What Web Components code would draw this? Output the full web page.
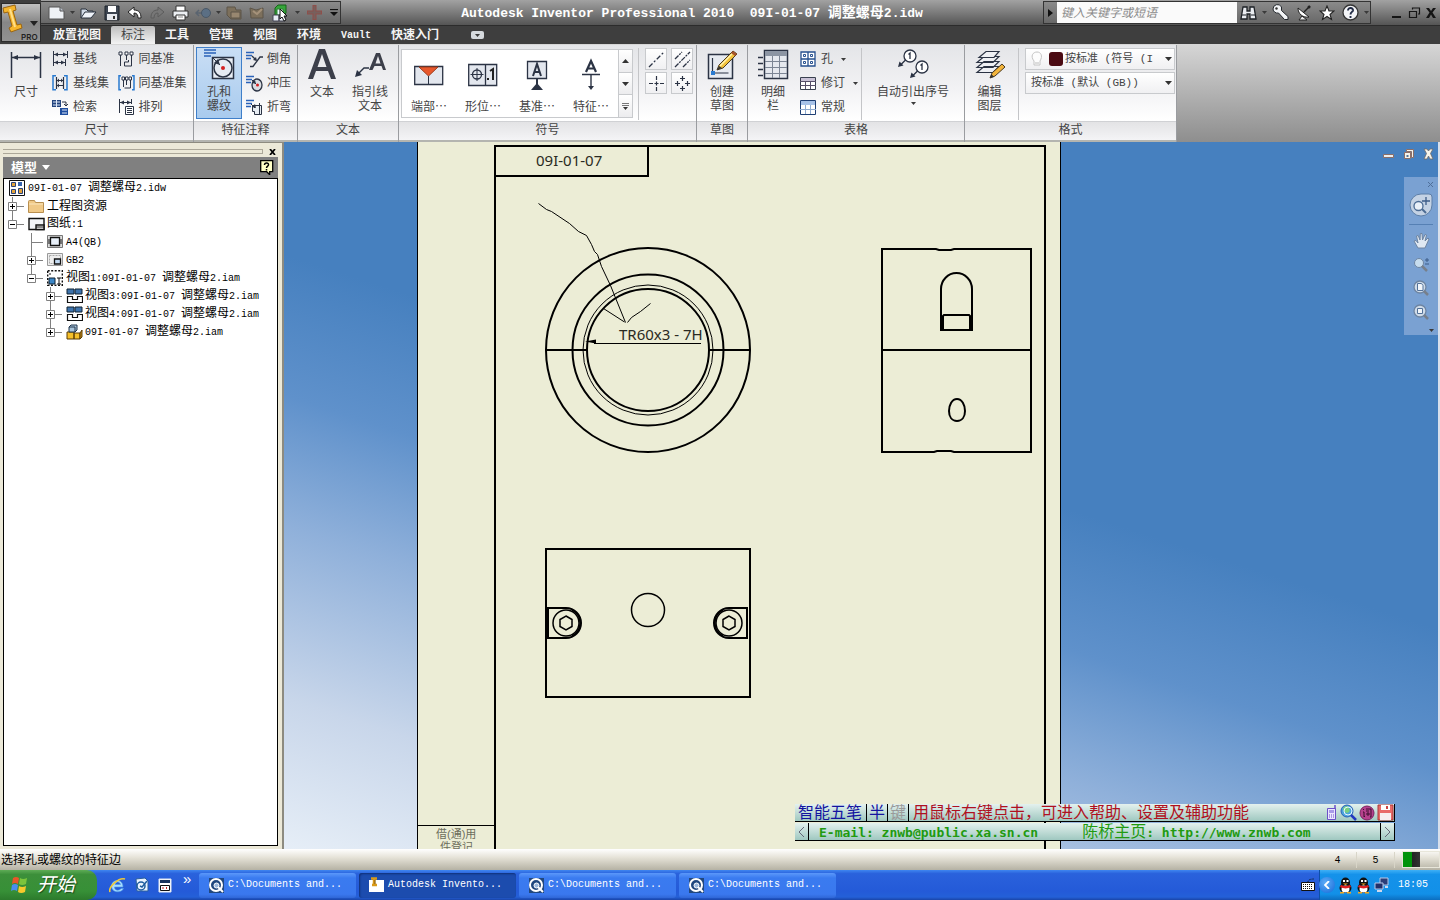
<!DOCTYPE html>
<html lang="zh-CN">
<head>
<meta charset="utf-8">
<title>Autodesk Inventor Professional 2010</title>
<style>
html,body{margin:0;height:100%;overflow:hidden}
body{font:12px/14px "Liberation Sans","Noto Sans CJK SC",sans-serif;color:#444}
</style>
</head>
<body>
<inventor-app></inventor-app>
<script>
const COMMON = `
*{box-sizing:border-box}
button,input,select{font:inherit;color:inherit;margin:0;padding:0;border:0;background:none;border-radius:0}
a{color:inherit;text-decoration:none}
.l{font-family:"Liberation Mono",monospace;font-size:var(--latin,10px);white-space:pre}
svg{display:block}
`;
/* Latin runs get the monospaced half-width face */
const mix = s => s.replace(/[\x20-\x7e]+/g, r => `<span class="l">${r}</span>`);

class Base extends HTMLElement {
  connectedCallback() {
    if (this.shadowRoot) return;
    const t = document.createElement('template');
    t.innerHTML = `<style>${COMMON}${this.css()}</style>${this.html()}`;
    this.attachShadow({mode: 'open'}).append(t.content.cloneNode(true));
  }
  css() { return ':host{display:block}'; }
}
const def = (name, css, html) => customElements.define(name, class extends Base {
  css() { return css; }
  html() { return typeof html === 'function' ? html(this) : html; }
});

const D = '#2b3344';
const lines3 = `<path d="M0 1.5h8M0 4.5h6M0 7.5h5" stroke="#2a62b8" stroke-width="1.4"/>`;
const pencil = `<path d="M10 20l2-5L26 1l4 3-14 14z" fill="#f3c33c" stroke="#4a3a20"/><path d="M24 3l4 3 2-2-4-3z" fill="#a5532d"/><path d="M13 16L25 4" stroke="#fff3b0" stroke-width="1.5"/><path d="M10 20l2-4 3 2z" fill="#333"/>`;
const ICONS = {
  new: [18,14,`<path d="M1 1h11l4 4v8H1z" fill="#eef1f5" stroke="#555"/><path d="M12 1v4h4" fill="#b9c0ca" stroke="#555"/>`],
  open: [17,14,`<path d="M1 12V3h5l2 2h5v2" fill="#cfd8e4" stroke="#28303c"/><path d="M1 12l4-6h11l-5 6z" fill="#eef2f8" stroke="#28303c"/>`],
  save: [17,16,`<path d="M1 1h14v14H1z" fill="#3c4450" stroke="#1d222a"/><path d="M4 1h8v6H4z" fill="#fff"/><path d="M3 9h10v6H3z" fill="#e6e9ee"/><path d="M9 11h2v3H9z" fill="#333"/>`],
  undo: [16,14,`<path d="M1 6l6-5v3c5 0 7 3 7 8h-3c0-3-1-5-4-5v4z" fill="#fff" stroke="#222"/>`],
  redo: [15,14,`<path d="M14 6L8 1v3C3 4 1 7 1 12h3c0-3 1-5 4-5v4z" fill="#777" stroke="#5c5c5c"/>`],
  print: [17,16,`<path d="M4 1h9v6H4z" fill="#fff" stroke="#333"/><path d="M1 6h15v6H1z" fill="#eceff3" stroke="#333"/><path d="M4 10h9v5H4z" fill="#fff" stroke="#333"/><path d="M6 12h5" stroke="#888"/>`],
  ball: [16,12,`<path d="M7 6H1m3-3L1 6l3 3" stroke="#5a6470" fill="none" stroke-width="1.5"/><circle cx="11" cy="6" r="4.500" fill="#5b6f84" stroke="#4b5866"/>`],
  sheets: [16,14,`<path d="M1 1h8l1 3h5v9H5l-4-4z" fill="#7d705c" stroke="#5d5548"/><path d="M5 6h9v6H5z" fill="#988770" stroke="#5d5548"/>`],
  sheets2: [16,14,`<path d="M1 2l6 2 7-2v10H2z" fill="#7d705c" stroke="#5d5548"/><path d="M4 5l4 3 5-5" fill="none" stroke="#a5927a" stroke-width="2"/>`],
  select: [18,18,`<path d="M3 4l3-3h8v8l-3 3H3z" fill="#36a53a" stroke="#156318"/><path d="M5 5h6v6H5z" fill="#eff" stroke="#2c7a30"/><path d="M1 11h6v6H1zM7 11h6v6H7z" fill="#e8edf4" stroke="#445"/><path d="M8 5v10l2-2 2 4 2-1-2-4h3z" fill="#fff" stroke="#111"/>`],
  plus: [16,16,`<path d="M7.500 0v15M0 7.500h15" stroke="#8e4f4a" stroke-width="4"/><path d="M7.500 1v13M1 7.500h13" stroke="#77605d" stroke-width="2"/>`],
  qatmore: [8,7,`<path d="M0 .5h8" stroke="#111" stroke-width="1.200"/><path d="M0 3h8L4 7z" fill="#111"/>`],
  dot: [5,3,`<path d="M0 0h5L2.500 3z" fill="#3a3a3a"/>`],
  binoc: [17,16,`<path d="M3 2h4v4h3V2h4l2 12h-6V9H7v5H1z" fill="#e9ecf0" stroke="#1d2126" stroke-width="1.300"/><path d="M2 10h4M11 10h4" stroke="#1d2126"/>`],
  key: [17,17,`<path d="M1 5a4.500 4.500 0 018.500-2v3.500L16 12.500v3h-3.500L6.500 9A4.500 4.500 0 011 5z" fill="#f2f4f6" stroke="#23272c"/><circle cx="4.500" cy="4.500" r="1.200" fill="#333"/>`],
  dish: [15,16,`<path d="M1 3c0 6 5 10 11 9z" fill="#fff" stroke="#222"/><path d="M7 7l6-6" stroke="#222" stroke-width="1.500"/><circle cx="12" cy="2" r="1.500" fill="#222"/><path d="M2 15l3-4 5 4z" fill="#eee" stroke="#222"/>`],
  star: [16,16,`<path d="M8 1l2 5h5l-4 3.500 1.500 5L8 11.500 3.500 14.500 5 9.500 1 6h5z" fill="#fff" stroke="#222" stroke-width="1.100"/>`],
  help: [17,17,`<circle cx="8.500" cy="8.500" r="7.500" fill="#f3f4f7" stroke="#333" stroke-width="1.300"/><path d="M6 6.500c0-3.500 5.500-3 5 0-.3 1.500-2.500 1.500-2.500 4M8.500 12v2" fill="none" stroke="#222c46" stroke-width="1.900"/>`],
  wmin: [12,12,`<path d="M1 9h9v2H1z" fill="#151515"/>`],
  wmax: [13,12,`<path d="M4.500 2.500V1h7v6H10M1.500 4.500h7v6h-7z" fill="none" stroke="#151515" stroke-width="1.200"/>`],
  wx: [12,12,`<path d="M1 1h3l2 3 2-3h3L7.500 5.500 11 11H8L6 7.500 4 11H1l3.500-5.500z" fill="#151515"/>`],
  dmin: [13,12,`<path d="M1.500 6.500h10v3h-10z" fill="#eee" stroke="#8c6f68"/>`],
  dmax: [13,12,`<path d="M4.500 1.500h7v8h-2v-6h-5z" fill="#f6f3ea" stroke="#8c6f68"/><path d="M2.500 4.500h6v6h-6z" fill="#f6f3ea" stroke="#8c6f68"/><path d="M4.500 7h2v2h-2z" fill="#55749a"/>`],
  dx: [13,12,`<path d="M2 1h3l1.500 2L8 1h3L8.500 5.500 11 11H8L6.500 8 5 11H2l2.500-5.500z" fill="#f6f3ea" stroke="#6f6a68" stroke-width=".8"/>`],
  dim: [32,34,`<path d="M1.500 4v26M30.500 4v26M2 9.500h28" stroke="${D}" fill="none" stroke-width="1.500"/><path d="M2 9.500l6-2.500v5zM30 9.500l-6-2.500v5z" fill="${D}"/>`],
  base: [16,16,`<path d="M1.500 0v15M15.500 0v7M2 3.500h13M2 11.500h11M13.500 8v7" stroke="${D}" fill="none"/><path d="M2 3.500l4-2v4zM15 3.500l-4-2v4zM2 11.500l4-2v4zM13 11.500l-4-2v4z" fill="${D}"/>`],
  baseset: [16,16,`<path d="M4 .7H1v14h3M12 .7h3v14h-3" stroke="#2a7bd0" fill="none" stroke-width="1.500"/><path d="M4.500 2v12M11.500 2v12M4 5.500h8M4 10.500h8" stroke="${D}" fill="none" stroke-width="1.200"/><path d="M5 5.500l2-2v4zM11 5.500l-2-2v4zM5 10.500l2-2v4z" fill="${D}"/>`],
  retr: [17,17,`<path d="M0 1h9v7H0z" fill="#23447e"/><path d="M1 3h7M1 6h7M4.500 1v7" stroke="#dfe8f7"/><path d="M8 9h8v7H8z" fill="#1f4ea0"/><path d="M10 11h5M10 14h5" stroke="#dfe8f7"/><path d="M10 3h4v4m-2-2l2 2 2-2" stroke="${D}" fill="none"/>`],
  ord: [16,16,`<path d="M2.500 3v12M8.500 3v6M13.500 3v12h-7v-4h4v-2" stroke="${D}" fill="none"/><path d="M1 1h3v3H1zM7 1h3v3H7zM12 1h3v3h-3z" fill="#fff" stroke="${D}"/>`],
  ordset: [17,16,`<path d="M3 .7H1v14h2M14 .7h2v14h-2" stroke="#2a7bd0" fill="none" stroke-width="1.500"/><path d="M5.500 5v7M8.500 5v5M12.500 5v8h-6" stroke="${D}" fill="none"/><path d="M4 2h2.500v3H4zM7.500 2H10v3H7.500zM11 2h2.500v3H11z" fill="#fff" stroke="${D}"/>`],
  arr: [17,17,`<path d="M1.500 0v14M13.500 0v5M2 3.500h11" stroke="${D}" fill="none"/><path d="M2 3.500l4-2v4zM13 3.500l-4-2v4z" fill="${D}"/><path d="M7.500 7.500h8v8h-8z" fill="#fff" stroke="${D}"/><path d="M9 9.500h5M9 11.500h5M9 13.500h5" stroke="${D}"/>`],
  hole: [32,34,`<path d="M1 2h12M1 5h12M1 8h7" stroke="#2a62b8" stroke-width="1.500"/><path d="M9.500 9.500h21v21h-21z" fill="#e9eef5" stroke="${D}" stroke-width="1.500"/><circle cx="20" cy="20" r="9" fill="#e6ebf2" stroke="${D}" stroke-width="1.500"/><circle cx="20" cy="20" r="2" fill="#d42020"/><path d="M10 10l7 7" stroke="${D}"/><path d="M17 17l-6-2 4-4z" fill="${D}"/>`],
  chamfer: [17,17,`${lines3}<path d="M4 15.500h3L14 6h3M6 5l4 4" stroke="${D}" fill="none" stroke-width="1.300"/><path d="M11 10L7 9l3-3z" fill="${D}"/>`],
  punch: [17,17,`${lines3}<ellipse cx="11" cy="10" rx="5" ry="6" fill="#d9dde3" stroke="${D}" stroke-width="1.300"/><path d="M6 5l4 4" stroke="${D}"/><path d="M10 9L6 8l3-3z" fill="${D}"/><circle cx="11.500" cy="10" r="1.500" fill="#d42020"/>`],
  bend: [17,17,`${lines3}<path d="M6.500 12.500v-6h9v9h-7v-3z" fill="#e8edf3" stroke="${D}"/><path d="M13.500 4v12" stroke="${D}"/><path d="M5 5l4 4" stroke="${D}"/><path d="M10 9L6 8l3-3z" fill="${D}"/>`],
  textA: [32,34,`<path d="M2 31L13 1h6l11 30h-5l-3-8H10l-3 8zM11.500 19h9L16 6z" fill="#3c3f4a" fill-rule="evenodd"/>`],
  leader: [32,34,`<path d="M15 22L22 5h4l6 17h-3l-1.500-4h-7L18.500 22zM21.500 15.500h5L24 8z" fill="#3c3f4a" fill-rule="evenodd"/><path d="M15 20h-5l-7 7" stroke="${D}" fill="none" stroke-width="1.400"/><path d="M1 29l2-7 5 5z" fill="${D}"/>`],
  endfill: [30,34,`<path d="M.7 8.500h28v18h-28z" fill="#e3e7ee" stroke="${D}" stroke-width="1.300"/><path d="M5 9h19L14.500 18z" fill="#e8582c" stroke="#9d3c1c"/><path d="M14.500 18v9" stroke="${D}"/>`],
  fcf: [30,34,`<path d="M.7 6.500h28v21H.7zM17.500 7v20" fill="#e3e7ee" stroke="${D}" stroke-width="1.300"/><circle cx="9" cy="16.500" r="4.500" fill="none" stroke="${D}" stroke-width="1.300"/><path d="M9 10v13M2.500 16.500h13" stroke="${D}"/><path d="M22 13l3-2v11M20 20v2" stroke="#222" stroke-width="2" fill="none"/>`],
  datum: [24,34,`<path d="M2.500 3.500h19v17h-19z" fill="#e3e7ee" stroke="${D}" stroke-width="1.300"/><path d="M8 18l4-12 4 12M9.500 14h5M12 21v6" fill="none" stroke="${D}" stroke-width="2"/><path d="M12 25l6 7H6z" fill="${D}"/>`],
  feat: [20,34,`<path d="M5 14L10 3l5 11M7 10.500h6" fill="none" stroke="${D}" stroke-width="2.200"/><path d="M1 16.500h18M10 17v13" stroke="${D}" stroke-width="1.400"/><path d="M10 32l-3-4h6z" fill="${D}"/>`],
  up: [7,4,`<path d="M0 4h7L3.500 0z" fill="#333"/>`],
  down: [7,4,`<path d="M0 0h7L3.500 4z" fill="#333"/>`],
  more: [7,7,`<path d="M0 .5h7M0 2.500h7" stroke="#555" stroke-width=".8"/><path d="M1 4h5L3.500 7z" fill="#333"/>`],
  c1: [17,17,`<path d="M1 16L16 1" stroke="${D}" stroke-width="1.300" stroke-dasharray="5 2 2 2"/>`],
  c2: [17,17,`<path d="M1 8L8 1M1 16L16 1M9 16l7-7" stroke="${D}" stroke-width="1.300" stroke-dasharray="5 1 2 1"/>`],
  c3: [17,17,`<path d="M8.500 1v4m0 1.500v4m0 1.500v4M1 8.500h4m1.500 0h4m1.500 0h4" stroke="${D}" stroke-width="1.200"/>`],
  c4: [17,17,`<path d="M8.500 1v5M6 3.500h5M3.500 6v5M1 8.500h5M13.500 6v5M11 8.500h5M8.500 11v5M6 13.500h5" stroke="${D}" stroke-width="1.200"/>`],
  sketch: [32,34,`<path d="M2.500 6.500h24v24h-24z" fill="#e7ebf1" stroke="${D}" stroke-width="1.500"/><path d="M6.500 10v15h16" stroke="${D}" fill="none" stroke-width="1.200"/><path d="M5 23h4v4H5z" fill="#2a7bd0"/><g transform="translate(1 2)">${pencil}</g>`],
  bom: [32,34,`<path d="M7.500 2.500h23v28h-23z" fill="#e5e8ee" stroke="${D}" stroke-width="1.500"/><path d="M8 3h22v5H8z" fill="#8c95a3"/><path d="M8 13.500h22M8 19.500h22M8 25.500h22M15.500 8v22M22.500 8v22" stroke="#7c8594"/><path d="M1 9.500h5M1 15.500h5M1 21.500h5M1 27.500h5" stroke="${D}" stroke-width="1.300"/>`],
  holes: [17,17,`<path d="M1 1h7v7H1zM8 1h7v7H8zM1 8h7v7H1zM8 8h7v7H8z" fill="#fff" stroke="#27508f" stroke-width="1.300"/><path d="M3.500 3.500h2v2h-2zM10.500 3.500h2v2h-2zM3.500 10.500h2v2h-2zM10.500 10.500h2v2h-2z" fill="#fff" stroke="#27508f"/>`],
  rev: [17,15,`<path d="M.5 1.500h15v12H.5z" fill="#fff" stroke="#39404f"/><path d="M1 2h14v3H1z" fill="#c9c2d6"/><path d="M0 5.500h16M0 9.500h16M5.500 5v8M10.500 5v8" stroke="#57506a"/>`],
  gen: [17,17,`<path d="M.5 1.500h15v14H.5z" fill="#fff" stroke="#1f3f74"/><path d="M1 2h14v4H1z" fill="#a7c2e8"/><path d="M0 10.500h16M5.500 6v9M10.500 6v9" stroke="#8fabd0"/>`],
  balloon: [32,34,`<circle cx="13" cy="8" r="6" fill="#fff" stroke="${D}" stroke-width="1.300"/><circle cx="25" cy="19" r="6" fill="#fff" stroke="${D}" stroke-width="1.300"/><path d="M11.500 6.500L13 5v6M23.500 17.500L25 16v6" stroke="${D}" fill="none" stroke-width="1.300"/><path d="M8.500 12L3 17.500M20.500 23L15 28.500" stroke="${D}" stroke-width="1.300"/><path d="M1 19l1.500-5.500 4 4zM13 30l1.500-5.500 4 4z" fill="${D}"/>`],
  layer: [32,34,`<path d="M3 24.500l7-6h15l-6 6zM3 19.500l7-6h15l-6 6zM3 14.500l7-6h15l-6 6z" fill="#eef0f4" stroke="${D}" stroke-width="1.200"/><path d="M5 9.500l7-6h13l-5 6z" fill="#eef0f4" stroke="${D}" stroke-width="1.200"/><path d="M16 30l2-5 10-9 3 3-10 9z" fill="#f3b53c" stroke="#4a3a20"/><path d="M16 30l1.500-4 2.500 3z" fill="#333"/>`],
  bulb: [12,16,`<path d="M3 10C-1 5 2 1 6 1s6 4 3 9v4H3z" fill="#fdfdfd" stroke="#c4c4c4"/><path d="M4 12h4" stroke="#bbb"/>`],
  root: [16,16,`<path d="M.5.5h15v15H.5z" fill="#fff" stroke="#111"/><path d="M2.500 9.500h4v4h-4zM9.500 8.500h4v5h-4z" fill="#e3a33a" stroke="#28427a"/><path d="M2.500 2.500h4v4h-4z" fill="#e3a33a" stroke="#28427a"/><path d="M9 2h4v4H9z" fill="#3865b0"/>`],
  folder: [17,15,`<path d="M.5 2.500q0-1 1-1h5l1 2h8v10H.5z" fill="#f0c987" stroke="#b98f4f"/><path d="M1 5h14" stroke="#fbe6bd"/>`],
  sheet: [17,14,`<path d="M1 1.500h15v11H1z" fill="#f2f4f7" stroke="#111" stroke-width="1.400"/><path d="M8 8h8v4.500H8z" fill="#fff" stroke="#111" stroke-width="1.400"/><path d="M8 10h8" stroke="#111"/>`],
  border: [16,14,`<path d="M.5.5h15v12H.5z" fill="#ddd" stroke="#777"/><path d="M3.500 2.500h9v8h-9z" fill="#e8eff8" stroke="#111" stroke-width="1.300"/><path d="M2 4v5M14 4v5" stroke="#111"/>`],
  tblock: [16,14,`<path d="M.5.5h15v12H.5z" fill="#eee" stroke="#999"/><path d="M2.500 2.500h11v8h-11z" fill="none" stroke="#aaa" stroke-dasharray="2 1"/><path d="M7.500 6h6v5h-6z" fill="#c4dbf3" stroke="#111" stroke-width="1.300"/>`],
  view1: [16,16,`<path d="M.7.7h14.600v14.600H.7z" fill="#fff" stroke="#111" stroke-dasharray="2 1.500" stroke-width="1.400"/><path d="M2 8h6v6H2z" fill="#3b86c6" stroke="#123"/><path d="M3 5V3M10 8h4M12 8v6M10 14h4" stroke="#111" fill="none"/>`],
  viewn: [17,16,`<path d="M1 1h7v5H1zM9 1h7v5H9z" fill="#3f74ad" stroke="#123"/><path d="M1.500 8.500h5v3h5v-3h5M1.500 8v6.500h15V8" fill="#fff" stroke="#111" stroke-width="1.200"/>`],
  cubes: [17,17,`<path d="M1 8h7v7H1zM8 9h6v6H8z" fill="#f6c02a" stroke="#5a3d05"/><path d="M14 9l2-3v7l-2 2z" fill="#c98b14" stroke="#5a3d05"/><path d="M3 3l2-2h6v5L9 8H3z" fill="#a9c4da" stroke="#20354a"/><path d="M3 3h6v5" fill="none" stroke="#20354a"/>`],
  bhelp: [14,15,`<path d="M.7.7h12v11h-3v3l-3-3h-6z" fill="#ffffc8" stroke="#000" stroke-width="1.300"/><path d="M4.500 5c0-3 4.500-2.500 4 0-.2 1.200-2 1.200-2 3M6.500 9v1.500" fill="none" stroke="#000" stroke-width="1.500"/>`],
  bx: [7,6,`<path d="M1 0l5 6M6 0L1 6" stroke="#000" stroke-width="1.700"/>`],
  nwheel: [24,26,`<path d="M12 1h8q3 0 3 3v8A11 11 0 1112 1z" fill="#c4d2e4" stroke="#5d7fa8"/><circle cx="9.500" cy="13" r="4.500" fill="#e9f0f8" stroke="#4c6c94" stroke-width="1.300"/><path d="M13 16l4 4" stroke="#4c6c94" stroke-width="2"/><path d="M17 4v8M13 8h8" stroke="#3c5c88" stroke-width="1.300"/>`],
  hand: [17,17,`<path d="M5 16L1 9l2-.5L5 11 3.500 4l1.700-.5L7 8l.3-6.500H9L9.500 8 12 2.500l1.500.5L12 9l3-3 1 1-4 9z" fill="#dfe8f2" stroke="#6e85a2"/>`],
  nz: [17,17,`<circle cx="6" cy="7" r="4.500" fill="#c6dcee" stroke="#6e85a2"/><path d="M9 10l5 5" stroke="#77808c" stroke-width="2.500"/><path d="M14 2v4M12 4h4M12 8h4" stroke="#3c5c88"/>`],
  np: [17,17,`<circle cx="7" cy="7" r="6" fill="#cfdbe8" stroke="#6e85a2" stroke-width="1.300"/><path d="M11 11l4 4" stroke="#77808c" stroke-width="2.500"/><path d="M4.500 3.500h4l1.500 2v5h-5.500z" fill="#f2f6fa" stroke="#53729a"/>`],
  nb: [17,17,`<circle cx="7" cy="7" r="6" fill="#cfdbe8" stroke="#6e85a2" stroke-width="1.300"/><path d="M11 11l4 4" stroke="#77808c" stroke-width="2.500"/><path d="M4.500 4.500h5v5h-5z" fill="#f2f6fa" stroke="#53729a"/>`],
  nx: [6,6,`<path d="M0 0l5 5M5 0L0 5" stroke="#4f6f99"/>`],
  phone: [12,15,`<path d="M1.500 3.500h8v11h-8z" fill="#ebe6ff" stroke="#6b50c8"/><path d="M9 0v4" stroke="#6b50c8" stroke-width="1.500"/><path d="M3 5h5v3H3z" fill="#a99ae8"/><path d="M3 10h5M3 12h5" stroke="#6b50c8" stroke-dasharray="1 1"/>`],
  globe: [17,17,`<circle cx="7" cy="7" r="6" fill="#4aa4dc" stroke="#2a5fb8"/><path d="M3 4q4-4 6 0t-2 5q-4-1-4-5z" fill="#78d080"/><circle cx="8" cy="7" r="4" fill="none" stroke="#e9f6ff"/><path d="M11 11l5 5" stroke="#2338c0" stroke-width="2.500"/>`],
  ci: [16,16,`<circle cx="8" cy="8" r="7" fill="#b6418d" stroke="#7b2361"/><path d="M4 4l1 1M4 7h1v5l1-1M7 4h5v8h-1M7 6h3M8 8h2v2H8z" stroke="#3d0f2f" fill="none"/>`],
  disk: [17,17,`<path d="M1 1h15v15H1z" fill="#e86a68" stroke="#a83a3a"/><path d="M4 1h9v5H4z" fill="#fff"/><path d="M9 2h2v3H9z" fill="#c44"/><path d="M3 9h11v7H3z" fill="#f6eeee"/>`],
  flag: [19,18,`<path d="M3 2q3-2 6 0L8 8Q5 6 2 8z" fill="#e8562a"/><path d="M10 2q3 2 7 0l-1 6q-4 2-7 0z" fill="#7cc43c"/><path d="M2 9q3-2 6 0l-1 6q-3-2-6 0z" fill="#4a8df0"/><path d="M9 10q3 2 7 0l-1 6q-4 2-7 0z" fill="#f8c92c"/>`],
  ie: [17,17,`<path d="M14 10H5.500c0 4 5 4 6.500 1.500h2.500c-2 5-12 4.500-12-2.500S14 1 14 10zM6 7.500h5.500c-1-3.500-4.500-3.500-5.500 0z" fill="#a8dcff" stroke="#4a9ae8" stroke-width=".6" fill-rule="evenodd"/><path d="M1 15C-1 10 10 0 16 2" fill="none" stroke="#f0c838" stroke-width="1.600"/>`],
  desk: [16,16,`<path d="M2 2l9-1 3 3v10H3z" fill="#e9f3ff" stroke="#2a5f9c"/><circle cx="7" cy="9" r="4" fill="none" stroke="#1e5d9e" stroke-width="1.500"/><path d="M6 9l2 1 5-6" stroke="#1e5d9e" stroke-width="1.500" fill="none"/>`],
  cal: [14,15,`<path d="M1 1h12v13H1z" fill="#fff" stroke="#dfe6f0"/><path d="M2 2h10v3H2z" fill="#18325c"/><path d="M2.500 7.500h9v5h-9z" fill="#fff" stroke="#111"/><path d="M4.500 10h1M8 10h1" stroke="#c22" stroke-width="2"/>`],
  cdoc: [17,17,`<path d="M1 1h15v15H1z" fill="#20477e"/><circle cx="8" cy="8" r="6" fill="none" stroke="#fff" stroke-width="2"/><circle cx="8.500" cy="8.500" r="2.500" fill="#9db9dc" stroke="#fff"/><path d="M10 10l5 5" stroke="#fff" stroke-width="2"/>`],
  inv: [17,16,`<path d="M1 3h15v12H1z" fill="#fff"/><path d="M3 1.500h6M6 1v7M4 8h5" stroke="#d99a18" stroke-width="2.500"/><path d="M7 3v4" stroke="#7a5510"/>`],
  kbd: [15,14,`<path d="M7 4q0-3 6-3" fill="none" stroke="#111" stroke-dasharray="1 1"/><path d="M.5 4.500h13v8H.5z" fill="#fff" stroke="#111"/><path d="M2 6.500h10M2 8.500h10M2 10.500h10" stroke="#111" stroke-dasharray="1 1"/>`],
  qq: [15,17,`<ellipse cx="7.500" cy="5.500" rx="4.500" ry="5" fill="#111"/><ellipse cx="7.500" cy="11" rx="6" ry="5" fill="#111"/><ellipse cx="7.500" cy="12" rx="4" ry="3.500" fill="#fff"/><path d="M2.500 9q5 2.500 10 0" stroke="#e02020" stroke-width="2.500" fill="none"/><path d="M5 3h2v2H5zM8.500 3h2v2h-2z" fill="#fff"/><path d="M5 6.500h5L7.500 8zM2 15h4v1.500H2zM9 15h4v1.500H9z" fill="#f5a81c"/>`],
  net: [16,16,`<path d="M6 1h8v7H6z" fill="#2d3e78" stroke="#b9c8e8"/><path d="M1 6h8v6H1z" fill="#22306a" stroke="#b9c8e8"/><path d="M3 14h5M11 10h3" stroke="#cfd8ec" stroke-width="2"/>`]
};
def('x-icon', ':host{display:block;flex:none}', el => {
  const [w, h, c] = ICONS[el.getAttribute('name')];
  return `<svg width="${w}" height="${h}" viewBox="0 0 ${w} ${h}" fill="none" aria-hidden="true">${c}</svg>`;
});
const ic = n => `<x-icon name="${n}"></x-icon>`;

/* ---- title bar ---- */
const slot = (w, n, label) => `<button style="width:${w}px" aria-label="${label}">${ic(n)}</button>`;
def('quick-access', `:host{display:flex;align-items:center;height:23px;width:300px;padding-left:6px;border:1px solid #333;border-left:0;background:linear-gradient(#8a8a8a,#686868)}
button{display:flex;justify-content:center;align-items:center;height:21px;flex:none}`,
  slot(20,'new','新建')+slot(10,'dot','新建选项')+slot(23,'open','打开')+slot(24,'save','保存')+slot(22,'undo','放弃')+slot(22,'redo','重做')+slot(24,'print','打印')+slot(22,'ball','返回')+slot(8,'dot','返回选项')+slot(24,'sheets','更新')+slot(22,'sheets2','全部更新')+slot(26,'select','选择')+slot(6,'dot','选择选项')+slot(30,'plus','添加')+slot(8,'qatmore','自定义'));

def('info-search', `:host{display:flex;align-items:center;height:23px;width:328px;border:1px solid #333;background:linear-gradient(#8a8a8a,#686868)}
.go{width:13px;display:flex;justify-content:center}
input{width:180px;height:21px;padding-left:4px;background:#fafafa;color:#8a8a8a;font-style:italic;font-size:12px}
input::placeholder{color:#8a8a8a;opacity:1}
button{display:flex;justify-content:center;align-items:center;height:21px;flex:none}`,
  `<button class="go" aria-label="展开"><svg width="5" height="8"><path d="M0 0l5 4-5 4z" fill="#111"/></svg></button>
  <input aria-label="搜索" placeholder="键入关键字或短语">` +
  slot(23,'binoc','搜索')+slot(9,'dot','搜索选项')+slot(23,'key','速博中心')+slot(24,'dish','通讯中心')+slot(22,'star','收藏夹')+slot(24,'help','帮助')+slot(8,'dot','帮助选项'));

def('title-bar', `:host{display:flex;align-items:center;height:26px;background:linear-gradient(#a2a2a2,#555);border-bottom:1px solid #2c2c2c}
h1{flex:1;margin:0;text-align:center;font-size:14px;line-height:20px;font-weight:700;color:#fff;white-space:nowrap;--latin:13px}
.win{width:69px;padding-left:20px;display:flex;gap:5px}
.win button{width:12px}`,
  `<quick-access></quick-access><h1>${mix('Autodesk Inventor Professional 2010  09I-01-07 调整螺母2.idw')}</h1><info-search></info-search>
  <div class="win"><button aria-label="最小化">${ic('wmin')}</button><button aria-label="还原">${ic('wmax')}</button><button aria-label="关闭">${ic('wx')}</button></div>`);

def('ribbon-tabs', `:host{display:flex;align-items:center;height:18px;padding-left:2px;background:#3e3e3e}
button{height:18px;padding:0 10px;color:#f4f4f4;font-weight:700;line-height:16px;white-space:nowrap}
[aria-selected=true]{background:linear-gradient(#bdbdbd,#f4f4f4);color:#444;font-weight:400;border-radius:2px 2px 0 0}
.min{margin-left:22px;width:13px;height:8px;padding:0;background:#d6dade;border-radius:2px;display:flex;justify-content:center;align-items:center}`,
  '放置视图,标注,工具,管理,视图,环境,Vault,快速入门'.split(',').map((t,i)=>`<button role="tab" aria-selected="${i==1}">${mix(t)}</button>`).join('') +
  `<button class="min" aria-label="最小化功能区">${ic('dot')}</button>`);

def('app-menu', `:host{display:block;flex:none;width:41px;height:44px;padding:3px 0 2px 1px;background:#3e3e3e}
button{display:block;width:40px;height:39px;border:1px solid #2c2c2c;background:linear-gradient(#c0c0c0,#868686 50%,#929292)}`,
  `<button aria-label="应用程序菜单"><svg width="38" height="37"><path d="M1 4l12-3 1 5-3 1 4 14 4-1 1 4-11 4-2-4 3-2L6 8l-4 1z" fill="#f5b52c" stroke="#9a6512"/><path d="M8 5l5 18" stroke="#ffe08a" stroke-width="2"/><path d="M28 17h8l-4 5z" fill="#222"/><text x="19" y="36" font-family="Inter,sans-serif" font-size="8" font-weight="600" fill="#222">PRO</text></svg></button>`);

/* ---- ribbon ---- */
def('big-button', `:host{display:block;flex:none}
button{display:flex;flex-direction:column;align-items:center;width:100%;height:72px;gap:3px;border:1px solid transparent;line-height:14px;text-align:center;white-space:nowrap}
:host([active]) button{background:linear-gradient(#c9def5,#a9cbee);border-color:#3f7fc9}`,
  el => `<button>${ic(el.getAttribute('icon'))}<span>${el.getAttribute('label').replace('|','<br>')}</span>${el.hasAttribute('menu')?ic('dot'):''}</button>`);
def('small-button', `:host{display:block;height:24px}
button{display:flex;align-items:center;height:24px;gap:4px;white-space:nowrap}
x-icon{width:17px}.dd{width:5px;margin-left:4px}`,
  el => `<button>${ic(el.getAttribute('icon'))}<span>${el.getAttribute('label')}</span>${el.hasAttribute('menu')?`<x-icon class="dd" name="dot"></x-icon>`:''}</button>`);
def('ribbon-panel', `:host{display:flex;flex-direction:column;flex:none;height:97px;border-right:1px solid #9a9ca0;background:linear-gradient(#e4e5e8,#f2f2f4 45%,#fff 78%)}
.body{display:flex;height:76px;padding-top:2px}
h2{margin:0;height:21px;font-size:12px;line-height:17px;font-weight:400;text-align:center;border-top:1px solid #d0d1d4;border-bottom:2px solid #b4b5b0;background:linear-gradient(#e3e3e5,#f4f4f6)}`,
  el => `<div class="body"><slot></slot></div><h2>${el.getAttribute('label')}</h2>`);
def('symbol-gallery', `:host{display:flex;width:232px;height:69px;margin-top:2px;border:1px solid #c8cacd;background:#fff}
.i{display:flex;flex-direction:column;align-items:center;width:54px;height:67px;padding-top:8px;line-height:14px;gap:7px;font-family:"Noto Sans CJK SC",sans-serif}
.s{display:flex;flex-direction:column;width:14px;border-left:1px solid #c8cacd}
.s button{flex:1;display:flex;align-items:center;justify-content:center;border-bottom:1px solid #c8cacd;background:linear-gradient(#fff,#ececee)}
.s button:last-child{border:0}`,
  [['endfill','端部…'],['fcf','形位…'],['datum','基准…'],['feat','特征…']].map(([i,t])=>`<button class="i">${ic(i)}<span>${t}</span></button>`).join('') +
  `<div class="s"><button aria-label="上移">${ic('up')}</button><button aria-label="下移">${ic('down')}</button><button aria-label="更多">${ic('more')}</button></div>`);
def('center-marks', `:host{display:grid;grid-template-columns:22px 22px;grid-auto-rows:22px;gap:2px 4px;align-content:start;margin:1px 0 0 6px}
button{display:flex;align-items:center;justify-content:center;border:1px solid #c8cacd;background:linear-gradient(#fff,#f0f0f2)}`,
  ['c1','c2','c3','c4'].map(n=>`<button aria-label="中心线">${ic(n)}</button>`).join(''));
def('style-select', `:host{display:flex;align-items:center;width:150px;height:22px;border:1px solid #c8cacd;background:linear-gradient(#fff,#f0f0f2)}
label{display:flex;align-items:center;width:100%;padding:0 2px 0 5px}
select{appearance:none;flex:1;min-width:0;height:20px;font-family:"Liberation Mono","Noto Sans CJK SC",sans-serif;font-size:11px;outline:0}
.c{width:14px;height:14px;border-radius:3px;background:#4a0a12;margin:0 2px 0 6px}`,
  el => `<label>${el.hasAttribute('layer')?ic('bulb')+'<span class="c"></span>':''}<select aria-label="${el.getAttribute('value')}"><option>${el.getAttribute('value')}</option></select>${ic('down')}</label>`);

const big = (w,i,l,x='') => `<big-button style="width:${w}px" icon="${i}" label="${l}" ${x}></big-button>`;
const col = (w,items) => `<div style="width:${w}px">${items.map(([i,l,m])=>`<small-button icon="${i}" label="${l}" ${m||''}></small-button>`).join('')}</div>`;
const panel = (w,l,c) => `<ribbon-panel style="width:${w}px" label="${l}">${c}</ribbon-panel>`;
def('app-ribbon', `:host{display:flex;height:98px;padding-top:1px;background:linear-gradient(#d6d6d6,#8e8e8e)}
.sep{width:1px;height:72px;background:#c4c5c8;margin-top:1px}`,
  panel(194,'尺寸', big(52,'dim','尺寸')+col(66,[['base','基线'],['baseset','基线集'],['retr','检索']])+col(76,[['ord','同基准'],['ordset','同基准集'],['arr','排列']])) +
  panel(104,'特征注释', `<div style="width:2px"></div>`+big(46,'hole','孔和|螺纹','active')+`<div style="width:4px"></div>`+col(50,[['chamfer','倒角'],['punch','冲压'],['bend','折弯']])) +
  panel(101,'文本', big(48,'textA','文本')+big(48,'leader','指引线|文本')) +
  panel(298,'符号', `<symbol-gallery style="margin-left:2px"></symbol-gallery><div style="width:5px"></div><div class="sep"></div><center-marks></center-marks>`) +
  panel(51,'草图', big(50,'sketch','创建|草图')) +
  panel(217,'表格', big(50,'bom','明细|栏')+`<div style="width:2px"></div>`+col(62,[['holes','孔','menu'],['rev','修订','menu'],['gen','常规']])+`<div class="sep"></div>`+big(102,'balloon','自动引出序号','menu')) +
  panel(212,'格式', big(49,'layer','编辑|图层')+`<div class="sep" style="margin:1px 6px 0 4px"></div><div style="display:grid;gap:2px;align-content:start;padding-top:1px"><style-select layer value="按标准 (符号 (I"></style-select><style-select value="按标准 (默认 (GB))"></style-select></div>`));

/* ---- model browser ---- */
def('tree-row', `:host{display:flex;align-items:center;height:18px;color:#000;white-space:nowrap}
x-icon{width:19px}`,
  el => {
    const lv = +el.getAttribute('level'), t = el.getAttribute('toggle'), last = el.hasAttribute('last');
    const tw = lv ? `<svg width="22" height="18" style="margin-left:${(lv-1)*19+2}px" fill="none"><path d="M6.500 0v${last?9:18}M6.500 9.500H18" stroke="#808080"/>${t?`<path d="M2.500 5.500h8v8h-8z" fill="#fff" stroke="#808080"/><path d="M4 9.500h5${t=='+'?'M6.500 7v5':''}" stroke="#000"/>`:''}</svg>` : `<span style="width:5px"></span>`;
    return `${tw}${ic(el.getAttribute('icon'))}<span>${mix(el.getAttribute('label'))}</span>`;
  });
const tr = (lv,t,i,l,x='') => `<tree-row role="treeitem" level="${lv}" toggle="${t}" icon="${i}" label="${l}" ${x}></tree-row>`;
def('model-browser', `:host{display:flex;flex-direction:column;flex:none;width:284px;padding:3px 4px 3px 3px;background:#ece9d8;border-right:2px solid #8d8b80;border-top:1px solid #8d8b80}
.grip{display:flex;align-items:center;height:11px;gap:6px}
.grip i{flex:1;height:5px;border:1px solid #aca899;border-width:1px 1px 1px 0}
.grip button{width:9px}
header{display:flex;align-items:center;height:21px;padding:0 4px 0 8px;gap:5px;background:#808080;color:#fff;font-size:13px;font-weight:700}
header x-icon:last-child{margin-left:auto}
.tree{flex:1;border:1px solid #000;background:#fff}`,
  `<div class="grip"><i></i><button aria-label="关闭">${ic('bx')}</button></div>
  <header>模型<svg width="8" height="5"><path d="M0 0h8L4 5z" fill="#fff"/></svg>${ic('bhelp')}</header>
  <div class="tree" role="tree">` +
  tr(0,'','root','09I-01-07 调整螺母2.idw')+tr(1,'+','folder','工程图资源')+tr(1,'-','sheet','图纸:1','last')+tr(2,'','border','A4(QB)')+tr(2,'+','tblock','GB2')+tr(2,'-','view1','视图1:09I-01-07 调整螺母2.iam','last')+tr(3,'+','viewn','视图3:09I-01-07 调整螺母2.iam')+tr(3,'+','viewn','视图4:09I-01-07 调整螺母2.iam')+tr(3,'+','cubes','09I-01-07 调整螺母2.iam','last') + `</div>`);

/* ---- drawing ---- */
const bolt = `<path d="M2 608h18a15 15 0 010 30H2z" stroke-width="2"/><circle cx="20" cy="623" r="13" stroke-width="1.500"/><path d="M20 616l6 3.500v7L20 630l-6-3.500v-7z" stroke-width="1.500"/><path d="M26 610a14.500 14.500 0 010 26" stroke-width="1.500"/>`;
def('drawing-sheet', `:host{display:block;flex:none}
svg text{font-family:"Noto Sans",sans-serif;font-size:15px;fill:#2a2a22}
svg .zh{font-family:"Liberation Sans","Noto Sans CJK SC",sans-serif;font-size:11px;fill:#6d6d5c}`,
  `<svg width="644" height="708" viewBox="417 142 644 708" fill="none" stroke="#000" stroke-width="2" role="img" aria-label="工程图">
  <path d="M417 142h644v708H417z" fill="#ecedd6" stroke="none"/>
  <path d="M417.500 142v708M1060.500 142v708M417 825.500h78" stroke-width="1"/>
  <path d="M495 850V146h550v704M495 176h153V146"/>
  <circle cx="648" cy="350" r="102"/><circle cx="648" cy="350" r="75.500"/><circle cx="648" cy="350" r="65" stroke-width="1"/><circle cx="648" cy="350" r="61"/>
  <path d="M546 350h41M709 350h41"/>
  <path d="M538.500 203.500l8 6 5 2 18 12 9 8 8 4 5 9 3 7 3 3 4 12 9 19 15 37M603.500 308.500l21 13.500M627.500 322.500l4-5 9-6 10-8" stroke-width="1"/>
  <path d="M594 343.500h107" stroke-width="1"/><path d="M585 341.500l11-2v4z" fill="#000" stroke="none"/>
  <path d="M882 249h54l3 1h12l3-1h77v203h-77l-3-1h-14l-3 1h-52zM882 350h149"/>
  <path d="M941 330v-41a15.500 16 0 0131 0v41zM943 330v-14l1-1h25l1 1v14"/>
  <path d="M957 399c5 0 8 6 8 12s-3 10-8 10-8-4-8-10 3-12 8-12z"/>
  <path d="M546 549h204v148H546z"/><circle cx="648" cy="610" r="16.500" stroke-width="1.500"/>
  <g transform="translate(546 0)">${bolt}</g><g transform="translate(749 0) scale(-1 1)">${bolt}</g>
  <g stroke="none"><text x="536" y="166">09I-01-07</text><text x="619" y="340">TR60x3 - 7H</text>
  <text class="zh" x="436" y="838">借(通)用</text><text class="zh" x="440" y="851">件登记</text></g></svg>`);
def('nav-bar', `:host{display:flex;flex-direction:column;align-items:center;width:34px;height:158px;padding:5px 4px 3px 4px;background:#7aa1d2}
button{display:flex;justify-content:center;align-items:center;width:24px;height:24px;flex:none}
.x{width:auto;height:6px;align-self:flex-end}.w{height:28px;margin:4px 0}
hr{width:24px;margin:0 0 3px;border:0;border-top:1px solid #5580b4}.d{height:12px;width:auto;align-self:flex-end}`,
  `<button class="x" aria-label="关闭">${ic('nx')}</button><button class="w" aria-label="控制盘">${ic('nwheel')}</button><hr><button aria-label="平移">${ic('hand')}</button><button aria-label="缩放">${ic('nz')}</button><button aria-label="全部缩放">${ic('np')}</button><button aria-label="缩放选定实体">${ic('nb')}</button><button class="d" aria-label="选项">${ic('dot')}</button>`);
def('drawing-canvas', `:host{display:flex;flex:1;min-width:0;overflow:hidden;position:relative;border-right:2px solid #d8e0ec;background:linear-gradient(198deg,#4680bf 45%,#5f91cb 58%,#8fb0da 70%,#c8d6ea 86%,#e6eef7)}
drawing-sheet{margin-left:133px}
.win{position:absolute;top:6px;right:3px;display:flex;gap:7px}
nav-bar{position:absolute;right:0;top:35px}`,
  `<drawing-sheet></drawing-sheet><div class="win"><button aria-label="最小化">${ic('dmin')}</button><button aria-label="还原">${ic('dmax')}</button><button aria-label="关闭">${ic('dx')}</button></div><nav-bar></nav-bar>`);

/* ---- input method bar ---- */
def('ime-bar', `:host{display:grid;gap:1px;width:600px;font-size:16px;line-height:17px}
.r{display:flex;align-items:center;height:18px;border-bottom:1px solid #000;border-right:1px solid #000;background:linear-gradient(#e4f1ee,#9fc8c0);white-space:nowrap}
.r>*{height:17px;display:flex;align-items:center}
.b{color:#1414a0;padding:0 2px;border-right:1px solid #000}.b:first-child{padding:0 4px 0 3px}.g{color:#9a9a9a}
.m{color:#b01020;padding-left:4px;flex:1}.t{gap:2px}
.n{color:#7a8a88;width:14px;justify-content:center;border-right:1px solid #000}
.n:last-child{border-right:0;border-left:1px solid #000}
.p{flex:1;padding-left:10px;color:#219a10;--latin:13px;gap:44px}
.l{font-family:"DejaVu Sans Mono",monospace;font-weight:700}`,
  `<div class="r"><button class="b">智能五笔</button><button class="b">半</button><button class="b g">键</button><span class="m">用鼠标右键点击，可进入帮助、设置及辅助功能</span><span class="t">${['phone','globe','ci','disk'].map(ic).join('')}</span></div>
  <div class="r"><button class="n" aria-label="上一条"><svg width="7" height="12"><path d="M6 1L1 6l5 5" fill="none" stroke="#667"/></svg></button><span class="p"><a href="mailto:znwb@public.xa.sn.cn">${mix('E-mail: znwb@public.xa.sn.cn')}</a><a href="#">${mix('陈桥主页: http://www.znwb.com')}</a></span><button class="n" aria-label="下一条"><svg width="7" height="12"><path d="M1 1l5 5-5 5" fill="none" stroke="#667"/></svg></button></div>`);

/* ---- status bar and taskbar ---- */
def('status-bar', `:host{display:flex;align-items:center;height:21px;padding-left:1px;color:#000;background:linear-gradient(#fff,#e6e3d8 40%,#b5b2a4)}
.m{flex:1}.c{width:38px;text-align:center;border-right:1px solid #d8d5c8}
.i{width:38px;height:17px;margin-left:7px;border:1px solid #e8e6da;background:linear-gradient(90deg,#00930a 9px,#222 9px,#333 17px,transparent 17px)}`,
  `<span class="m">选择孔或螺纹的特征边</span><span class="c">${mix('4')}</span><span class="c">${mix('5')}</span><span class="i"></span>`);
const task = (i,l,c='') => `<button class="task ${c}">${ic(i)}${mix(l)}</button>`;
def('task-bar', `:host{display:flex;align-items:center;height:30px;color:#fff;background:linear-gradient(#3f86f0,#2a62dc 12%,#245ad8 70%,#2460d8 90%,#1a45a8)}
.start{display:flex;align-items:center;gap:8px;width:97px;height:30px;padding-left:10px;font-size:19px;font-style:italic;color:#fff;text-shadow:1px 1px 1px #1c4a18;border-radius:0 10px 10px 0;background:linear-gradient(#5eac56,#3c8f3a 15%,#379037 70%,#2c7a2c)}
.q{display:flex;align-items:center;gap:8px;width:102px;height:30px;padding-left:12px}
.q span{font-size:15px;line-height:18px;align-self:flex-start;margin-left:3px}
.tasks{display:flex;gap:3px;flex:1}
.task{display:flex;align-items:center;gap:3px;width:157px;height:25px;padding-left:9px;border-radius:3px;background:linear-gradient(#5b98fa,#3a7bf0 20%,#3a78ee 85%,#2f66d6);white-space:nowrap}
.on{background:#1c4cae;box-shadow:inset 1px 1px 2px #0f3078}
.tray{display:flex;align-items:center;gap:3px;height:30px;width:121px;background:linear-gradient(#3fb0f6,#1592ea 15%,#1290e8 80%,#0c6ebf);border-left:1px solid #0c50a8}
.tray .l{margin-left:5px}
.a{width:16px;height:16px;margin-left:-1px;border-radius:50%;background:radial-gradient(circle at 40% 35%,#5cacf8,#1569d8);display:flex;align-items:center;justify-content:center}
.k{margin-right:3px}`,
  `<button class="start">${ic('flag')}开始</button>
  <div class="q">${['ie','desk','cal'].map(ic).join('')}<span>»</span></div>
  <div class="tasks">${task('cdoc','C:\\Documents and...')}${task('inv','Autodesk Invento...','on')}${task('cdoc','C:\\Documents and...')}${task('cdoc','C:\\Documents and...')}</div>
  <div class="k">${ic('kbd')}</div>
  <div class="tray"><button class="a" aria-label="隐藏图标"><svg width="6" height="8"><path d="M5 0L1 4l4 4" fill="none" stroke="#fff" stroke-width="1.800"/></svg></button>${['qq','qq','net'].map(ic).join('')}${mix('18:05')}</div>`);

def('inventor-app', `:host{display:flex;flex-direction:column;height:100vh;position:relative}
.top{display:flex;flex:none}.top>div{flex:1;min-width:0}
app-ribbon,status-bar,task-bar{flex:none}
main{flex:1;display:flex;min-height:0}
ime-bar{position:absolute;right:45px;bottom:59px}`,
  `<div class="top"><app-menu></app-menu><div><title-bar></title-bar><ribbon-tabs></ribbon-tabs></div></div>
  <app-ribbon></app-ribbon><main><model-browser></model-browser><drawing-canvas></drawing-canvas></main>
  <status-bar></status-bar><task-bar></task-bar><ime-bar></ime-bar>`);
</script>
</body>
</html>
